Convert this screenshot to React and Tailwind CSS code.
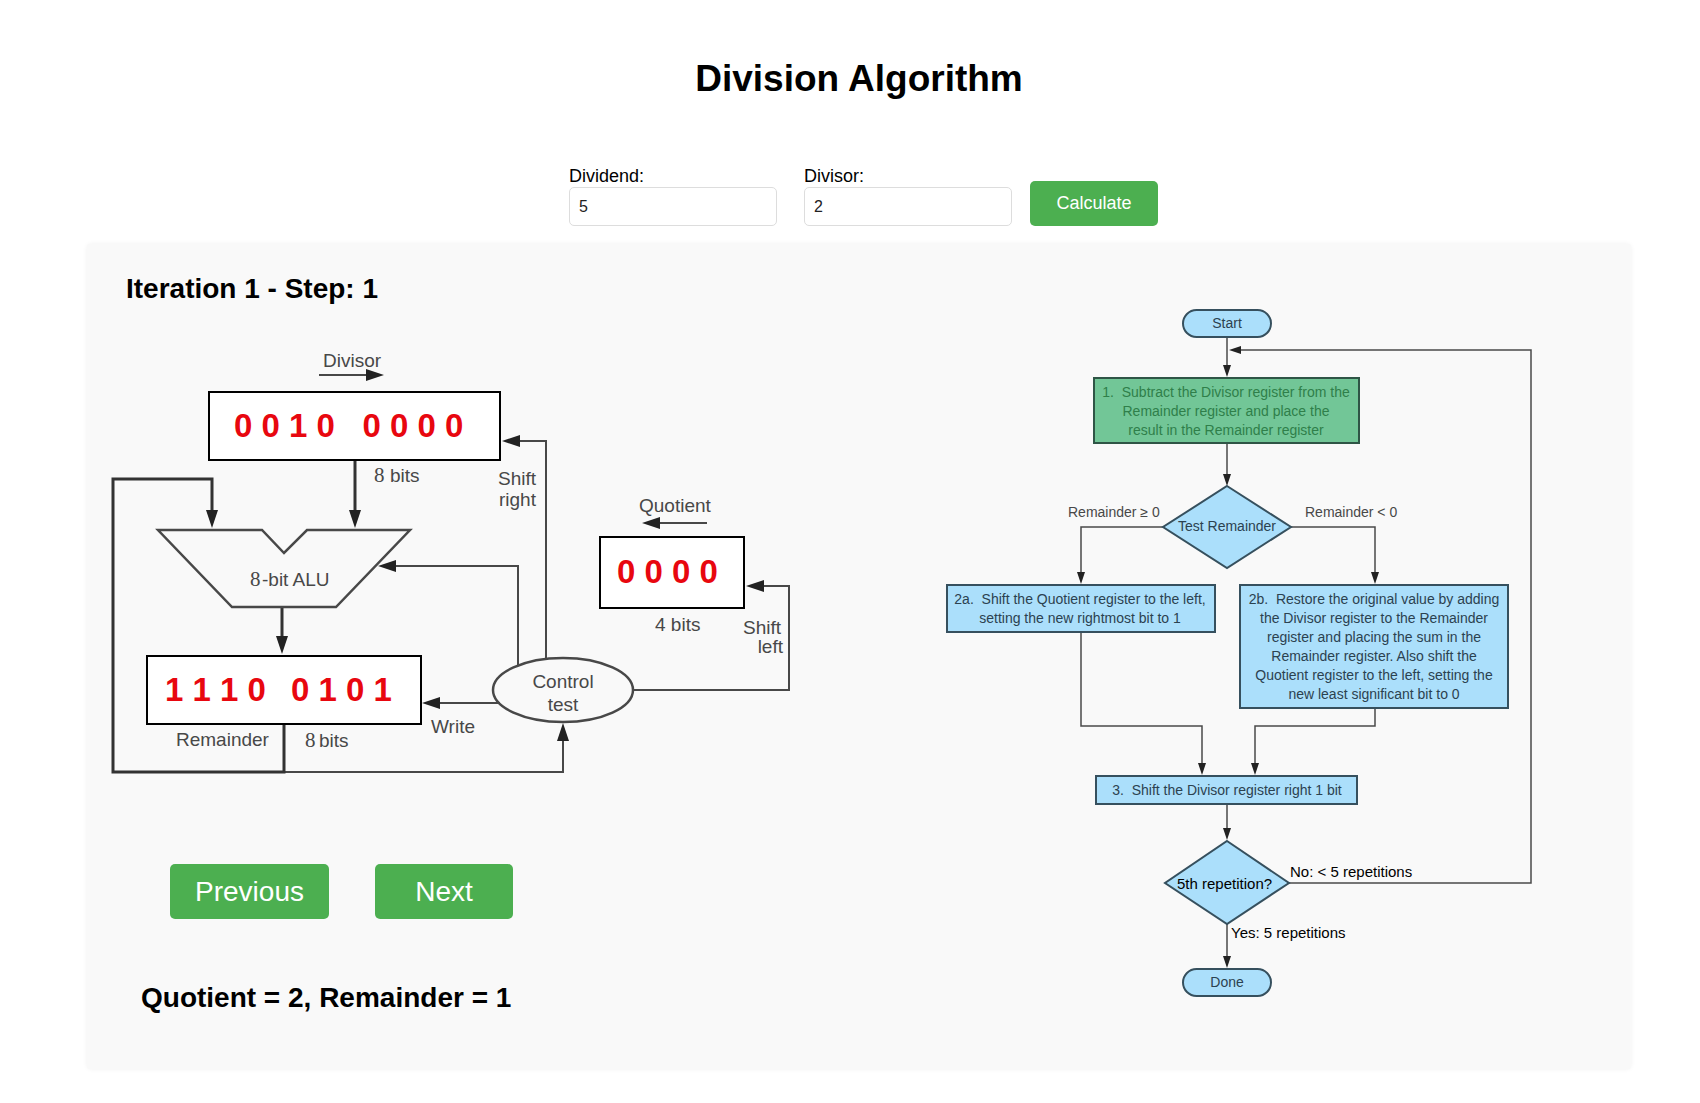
const INK = "#484848";
const HEAD = "#222222";

// Filled arrow head whose tip sits at (x, y).
function Head({ x, y, dir, size = 18, half = 6 }) {
  const points = {
    right: `${x},${y} ${x - size},${y - half} ${x - size},${y + half}`,
    left: `${x},${y} ${x + size},${y - half} ${x + size},${y + half}`,
    down: `${x},${y} ${x - half},${y - size} ${x + half},${y - size}`,
    up: `${x},${y} ${x - half},${y + size} ${x + half},${y + size}`,
  }[dir];
  return <polygon points={points} fill={HEAD} />;
}

function Register({ x, y, width, height }) {
  return (
    <rect x={x} y={y} width={width} height={height} fill="#fff" stroke="#000" strokeWidth="2" />
  );
}

function Bits({ x, y, children }) {
  return (
    <text x={x} y={y} className="fill-[#e8070f] text-[33px] font-bold whitespace-pre">
      {children}
    </text>
  );
}

function Eight({ x, y }) {
  return (
    <text x={x} y={y} className="font-['Liberation_Serif',serif] text-[21px]">
      8
    </text>
  );
}

function Hardware() {
  return (
    <svg
      viewBox="105 350 700 430"
      className="mt-[45px] h-auto w-full"
      role="img"
      aria-label="Division hardware"
    >
      <g fill="none" stroke={INK} strokeWidth="2">
        <path d="M319 375H368" />
        <path d="M515 441H546V659" />
        <path d="M392 566H518V666" />
        <path d="M435 703H500" />
        <path d="M656 523H707" />
        <path d="M633 690H789V586H760" />
        <path d="M284 772H563V738" />
      </g>
      <g fill="none" stroke="#333333" strokeWidth="3">
        <path d="M355 461V514" />
        <path d="M284 725V772H113V479H212V514" />
        <path d="M282 607V640" />
      </g>
      <path
        d="M158 530H262L284 553L307 530H410L336 607H232Z"
        fill="none"
        stroke={INK}
        strokeWidth="2.5"
      />
      <ellipse cx="563" cy="690" rx="70" ry="32" fill="none" stroke={INK} strokeWidth="2.5" />

      <Head x={384} y={375} dir="right" />
      <Head x={355} y={528} dir="down" />
      <Head x={212} y={528} dir="down" />
      <Head x={282} y={654} dir="down" />
      <Head x={502} y={441} dir="left" />
      <Head x={378} y={566} dir="left" />
      <Head x={422} y={703} dir="left" />
      <Head x={642} y={523} dir="left" />
      <Head x={746} y={586} dir="left" />
      <Head x={563} y={723} dir="up" />

      <Register x={209} y={392} width={291} height={68} />
      <Register x={147} y={656} width={274} height={68} />
      <Register x={600} y={537} width={144} height={71} />
      <Bits x={234} y={437}>{"0 0 1 0   0 0 0 0"}</Bits>
      <Bits x={165} y={701}>{"1 1 1 0"}</Bits>
      <Bits x={291} y={701}>{"0 1 0 1"}</Bits>
      <Bits x={617} y={583}>{"0 0 0 0"}</Bits>

      <g className="fill-[#484848] text-[19px]">
        <text x="323" y="367">Divisor</text>
        <Eight x={374} y={482} />
        <text x="390" y="482">bits</text>
        <text x="498" y="485">Shift</text>
        <text x="499" y="506">right</text>
        <Eight x={250} y={586} />
        <text x="262" y="586">-bit ALU</text>
        <text x="639" y="512">Quotient</text>
        <text x="655" y="631">4 bits</text>
        <text x="743" y="634">Shift</text>
        <text x="783" y="653" textAnchor="end">left</text>
        <text x="563" y="688" textAnchor="middle">Control</text>
        <text x="563" y="711" textAnchor="middle">test</text>
        <text x="431" y="733">Write</text>
        <text x="176" y="746">Remainder</text>
        <Eight x={305} y={747} />
        <text x="319" y="747">bits</text>
      </g>
    </svg>
  );
}

const steps = [
  {
    x: 1094, y: 378, w: 265, h: 65, cx: 1226, active: true,
    lines: [
      "1.  Subtract the Divisor register from the",
      "Remainder register and place the",
      "result in the Remainder register",
    ],
  },
  {
    x: 947, y: 585, w: 268, h: 47, cx: 1080,
    lines: ["2a.  Shift the Quotient register to the left,", "setting the new rightmost bit to 1"],
  },
  {
    x: 1240, y: 585, w: 268, h: 123, cx: 1374,
    lines: [
      "2b.  Restore the original value by adding",
      "the Divisor register to the Remainder",
      "register and placing the sum in the",
      "Remainder register. Also shift the",
      "Quotient register to the left, setting the",
      "new least significant bit to 0",
    ],
  },
  { x: 1096, y: 776, w: 261, h: 28, cx: 1227, lines: ["3.  Shift the Divisor register right 1 bit"] },
];

function Step({ x, y, w, h, cx, active, lines }) {
  return (
    <g>
      <rect
        x={x}
        y={y}
        width={w}
        height={h}
        fill={active ? "#72c697" : "#abdffb"}
        stroke={active ? "#2f5546" : "#36505e"}
        strokeWidth="2"
      />
      {lines.map((line, i) => (
        <text
          key={line}
          x={cx}
          y={y + 19 + i * 19}
          textAnchor="middle"
          className={active ? "fill-[#2f7f4a] whitespace-pre" : "fill-[#2b4250] whitespace-pre"}
        >
          {line}
        </text>
      ))}
    </g>
  );
}

function Flowchart() {
  return (
    <svg
      viewBox="935 300 610 705"
      className="mt-[27px] h-auto w-full text-[14px]"
      role="img"
      aria-label="Division flowchart"
    >
      <g fill="none" stroke="#4a4a4a" strokeWidth="1.5">
        <path d="M1227 337V368" />
        <path d="M1238 350H1531V883H1289" />
        <path d="M1227 443V476" />
        <path d="M1163 527H1081V576" />
        <path d="M1291 527H1375V576" />
        <path d="M1081 632V726H1202V766" />
        <path d="M1375 708V726H1255V766" />
        <path d="M1227 804V832" />
        <path d="M1227 924V960" />
      </g>
      <Head x={1227} y={377} dir="down" size={12} half={4} />
      <Head x={1229} y={350} dir="left" size={12} half={4} />
      <Head x={1227} y={486} dir="down" size={12} half={4} />
      <Head x={1081} y={584} dir="down" size={12} half={4} />
      <Head x={1375} y={584} dir="down" size={12} half={4} />
      <Head x={1202} y={775} dir="down" size={12} half={4} />
      <Head x={1255} y={775} dir="down" size={12} half={4} />
      <Head x={1227} y={840} dir="down" size={12} half={4} />
      <Head x={1227} y={968} dir="down" size={12} half={4} />

      <g fill="#abdffb" stroke="#36505e" strokeWidth="2">
        <rect x="1183" y="310" width="88" height="27" rx="13.5" />
        <rect x="1183" y="969" width="88" height="27" rx="13.5" />
        <path d="M1227 486L1291 527L1227 568L1163 527Z" />
        <path d="M1227 841L1289 883L1227 924L1165 883Z" />
      </g>

      {steps.map((step) => (
        <Step key={step.lines[0]} {...step} />
      ))}

      <g className="fill-[#2b4250]" textAnchor="middle">
        <text x="1227" y="328">Start</text>
        <text x="1227" y="531">Test Remainder</text>
        <text x="1227" y="987">Done</text>
      </g>
      <g className="fill-[#484848]">
        <text x="1068" y="517">Remainder ≥ 0</text>
        <text x="1305" y="517">Remainder &lt; 0</text>
      </g>
      <g className="fill-black text-[15px]">
        <text x="1177" y="889">5th repetition?</text>
        <text x="1290" y="877">No: &lt; 5 repetitions</text>
        <text x="1231" y="938">Yes: 5 repetitions</text>
      </g>
    </svg>
  );
}

function Field({ id, label, value }) {
  return (
    <div className="flex flex-col">
      <label htmlFor={id} className="text-[18px] leading-[22px]">
        {label}
      </label>
      <input
        id={id}
        type="text"
        defaultValue={value}
        className="h-[39px] w-[208px] rounded-[5px] border border-[#dddddd] bg-white px-[9px] text-base text-[#222222]"
      />
    </div>
  );
}

export default function App() {
  return (
    <main className="min-h-screen bg-white pt-[59px] pr-[69px] pb-8 pl-[87px] font-['Liberation_Sans',Arial,sans-serif] text-black">
      <h1 className="text-center text-[37px] leading-10 font-bold">Division Algorithm</h1>

      <form
        className="mt-[66px] flex flex-wrap items-end justify-center pl-[9px]"
        onSubmit={(event) => event.preventDefault()}
      >
        <div className="flex gap-[27px]">
          <Field id="dividend" label="Dividend:" value="5" />
          <Field id="divisor" label="Divisor:" value="2" />
        </div>
        <button
          type="submit"
          className="ml-[18px] h-[45px] w-32 rounded-[5px] bg-[#4caf50] text-[18px] text-white"
        >
          Calculate
        </button>
      </form>

      <section className="mt-[18px] grid grid-cols-[700fr_610fr] gap-[130px] rounded-[4px] bg-[#f9f9f9] pt-[29px] pr-[86px] pb-[55px] pl-[18px] shadow-[0_0_5px_rgba(0,0,0,0.06)]">
        <div>
          <h2 className="pl-[21px] text-[28px] leading-8 font-bold">Iteration 1 - Step: 1</h2>
          <Hardware />
          <div className="mt-[84px] flex gap-[46px] pl-[65px] text-[28px] text-white">
            <button type="button" className="h-[55px] w-[159px] rounded-[5px] bg-[#4caf50]">
              Previous
            </button>
            <button type="button" className="h-[55px] w-[138px] rounded-[5px] bg-[#4caf50]">
              Next
            </button>
          </div>
          <p className="mt-[63px] pl-9 text-[28px] leading-8 font-bold">
            Quotient = 2, Remainder = 1
          </p>
        </div>
        <Flowchart />
      </section>
    </main>
  );
}
